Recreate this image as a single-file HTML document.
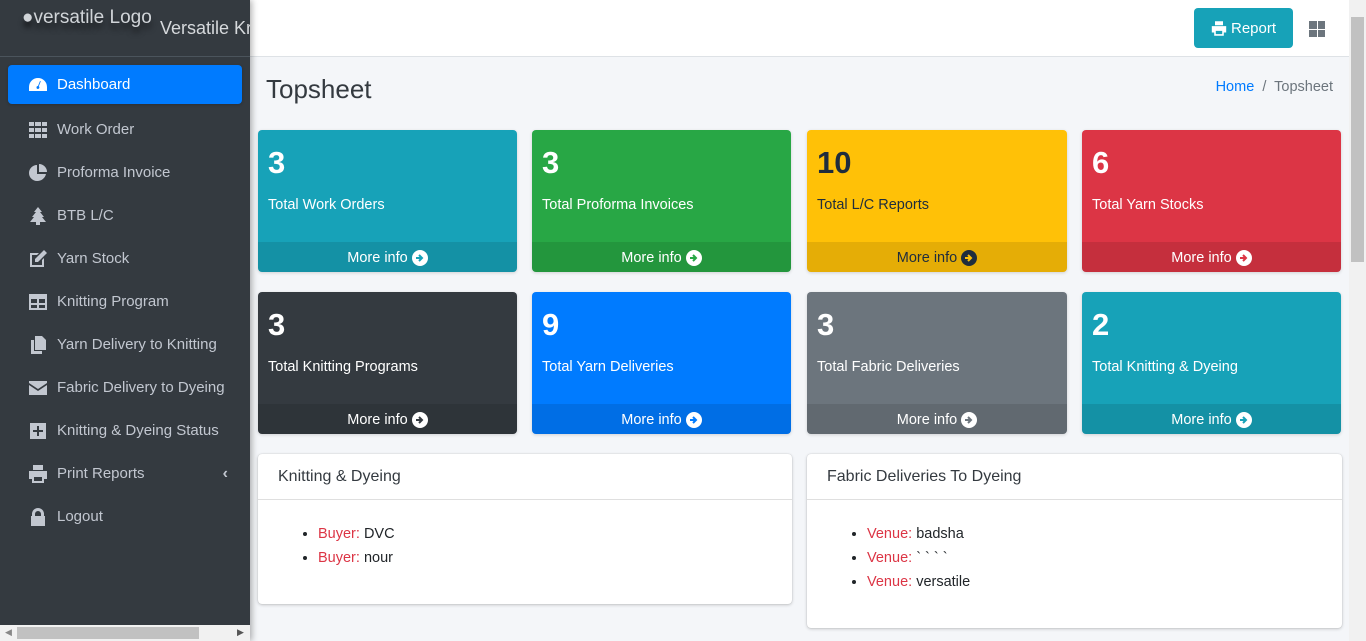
<!DOCTYPE html>
<html><head><meta charset="utf-8"><style>
*{box-sizing:border-box;margin:0;padding:0}
body{width:1366px;height:641px;overflow:hidden;background:#f4f6f9;font-family:"Liberation Sans",sans-serif;color:#212529;position:relative}
.sb{position:absolute;left:0;top:0;width:250px;height:641px;background:#343a40;box-shadow:2px 0 6px rgba(0,0,0,.3);z-index:3}
.brand{height:57px;border-bottom:1px solid #4b545c;position:relative;color:#c2c7d0;overflow:hidden;white-space:nowrap}
.brand .l1{position:absolute;left:22px;top:7px;font-size:19px;color:#d0d4d8;text-shadow:0 6px 6px rgba(0,0,0,.5)}
.brand .l2{position:absolute;left:160px;top:18px;font-size:18px;color:#d6d9dc}
.nav{padding:8px 8px}
.it{height:43px;display:flex;align-items:center;color:#c2c7d0;font-size:15px;padding-left:20px;border-radius:4px;position:relative}
.it.act{background:#007bff;color:#fff;height:39px;margin-bottom:4px;box-shadow:0 1px 3px rgba(0,0,0,.2)}
.it svg{width:20px;height:18px;margin-right:9px;fill:#c2c7d0}
.it.act svg{fill:#fff}
.hs{position:absolute;left:0;bottom:0;width:250px;height:16px;background:#f1f1f1}
.hs .th{position:absolute;left:17px;top:2px;width:182px;height:12px;background:#c1c1c1}
.top{position:absolute;left:250px;top:0;width:1099px;height:57px;background:#fff;border-bottom:1px solid #dee2e6}
.btn{position:absolute;left:944px;top:8px;width:99px;height:40px;background:#17a2b8;border-radius:4px;color:#fff;font-size:15px;display:flex;align-items:center;justify-content:center;gap:4px}
.grid{position:absolute;left:1059px;top:21px;width:16px;height:16px;display:grid;grid-template-columns:1fr 1fr;gap:1px}
.grid i{background:#6c757d}
.vs{position:absolute;right:0;top:0;width:17px;height:641px;background:#f1f1f1}
.vs .th{position:absolute;left:2px;top:17px;width:13px;height:245px;background:#c1c1c1}
h1{position:absolute;left:266px;top:74px;font-size:26px;font-weight:normal;color:#343a40}
.bc{position:absolute;right:33px;top:79px;font-size:14.5px;color:#6c757d}
.bc a{color:#007bff}
.box{position:absolute;width:259px;height:142px;border-radius:4px;color:#fff;overflow:hidden;box-shadow:0 1px 3px rgba(0,0,0,.15)}
.box b{position:absolute;left:10px;top:15px;font-size:31px}
.box span{position:absolute;left:10px;top:67px;font-size:14.5px}
.box .f{position:absolute;left:0;bottom:0;width:100%;height:30px;padding-top:2px;background:rgba(0,0,0,.1);display:flex;align-items:center;justify-content:center;font-size:14.5px;gap:4px}
.ar{width:16px;height:16px;border-radius:50%;background:currentColor;display:inline-flex;align-items:center;justify-content:center}
.card{position:absolute;background:#fff;border-radius:4px;box-shadow:0 0 1px rgba(0,0,0,.2),0 1px 3px rgba(0,0,0,.2)}
.card .h{height:46px;border-bottom:1px solid rgba(0,0,0,.125);padding:14px 20px;font-size:16px;color:#343a40}
.card ul{margin:22px 0 0 60px;font-size:14.5px;line-height:24px}
.card em{font-style:normal;color:#dc3545}
</style></head><body>
<div class="sb">
<div class="brand"><div class="l1">&#9679;versatile Logo</div><div class="l2">Versatile Kr</div></div>
<div class="nav">
<div class="it act"><svg viewBox="0 0 20 18"><path d="M10 2a9 9 0 0 0-9 9v4h18v-4a9 9 0 0 0-9-9zm0 11a1.5 1.5 0 1 1 0-3l2-5 .8.3-2 5a1.5 1.5 0 0 1-.8 2.7z"/></svg>Dashboard</div>
<div class="it"><svg viewBox="0 0 20 18"><path d="M1 1h5v4H1zM7 1h6v4H7zM14 1h5v4h-5zM1 7h5v4H1zM7 7h6v4H7zM14 7h5v4h-5zM1 13h5v4H1zM7 13h6v4H7zM14 13h5v4h-5z"/></svg>Work Order</div>
<div class="it"><svg viewBox="0 0 20 18"><path d="M9 1v9h9A9 9 0 0 1 9 17 8 8 0 0 1 9 1zM11 0a8 8 0 0 1 8 8h-8z"/></svg>Proforma Invoice</div>
<div class="it"><svg viewBox="0 0 20 18"><path d="M10 0l4 5h-2l4 5h-2l4 5h-6v3H8v-3H2l4-5H4l4-5H6z"/></svg>BTB L/C</div>
<div class="it"><svg viewBox="0 0 20 18"><path d="M2 3h9l-2 2H4v10h10v-5l2-2v9H2zM16 0l3 3-9 9H7V9z"/></svg>Yarn Stock</div>
<div class="it"><svg viewBox="0 0 20 18"><path d="M1 1h18v16H1zm2 5v4h6V6zm8 0v4h6V6zm-8 6v3h6v-3zm8 0v3h6v-3z"/></svg>Knitting Program</div>
<div class="it"><svg viewBox="0 0 20 18"><path d="M7 0h7l4 4v10H7zM3 4h3v11h8v3H3z"/></svg>Yarn Delivery to Knitting</div>
<div class="it"><svg viewBox="0 0 20 18"><path d="M1 2h18v2l-9 6-9-6zM1 6l9 6 9-6v10H1z"/></svg>Fabric Delivery to Dyeing</div>
<div class="it"><svg viewBox="0 0 20 18"><path d="M2 1h16v16H2zm7 3v4H5v2h4v4h2v-4h4V8h-4V4z"/></svg>Knitting &amp; Dyeing Status</div>
<div class="it"><svg viewBox="0 0 20 18"><path d="M5 0h10v5H5zM1 6h18v8h-3v4H4v-4H1zm5 6v4h8v-4z"/></svg>Print Reports<span style="position:absolute;right:14px;font-size:16px;font-weight:bold">&lsaquo;</span></div>
<div class="it"><svg viewBox="0 0 20 18"><path d="M4 8V6a6 6 0 0 1 12 0v2h1v10H3V8zm3 0h6V6a3 3 0 0 0-6 0z"/></svg>Logout</div>
</div>
<div class="hs"><div class="th"></div><span style="position:absolute;left:5px;top:2px;font-size:9px;color:#888">&#9664;</span><span style="position:absolute;left:237px;top:2px;font-size:9px;color:#555">&#9654;</span></div>
</div>
<div class="top">
<div class="btn"><svg width="16" height="15" viewBox="0 0 20 18" fill="#fff"><path d="M5 0h10v5H5zM1 6h18v8h-3v4H4v-4H1zm5 6v4h8v-4z"/></svg>Report</div>
<div class="grid"><i></i><i></i><i></i><i></i></div>
</div>
<div class="vs"><div class="th"></div></div>
<h1>Topsheet</h1>
<div class="bc"><a>Home</a> &nbsp;/&nbsp; Topsheet</div>

<div class="box" style="left:258px;top:130px;background:#17a2b8"><b>3</b><span>Total Work Orders</span><div class="f">More info <i class="ar"><svg width="10" height="10" viewBox="0 0 10 10"><path d="M1 5h6M4 2l3 3-3 3" stroke="#17a2b8" stroke-width="2" fill="none"/></svg></i></div></div>
<div class="box" style="left:532px;top:130px;background:#28a745"><b>3</b><span>Total Proforma Invoices</span><div class="f">More info <i class="ar"><svg width="10" height="10" viewBox="0 0 10 10"><path d="M1 5h6M4 2l3 3-3 3" stroke="#28a745" stroke-width="2" fill="none"/></svg></i></div></div>
<div class="box" style="left:807px;top:130px;width:260px;background:#ffc107;color:#1f2d3d"><b>10</b><span>Total L/C Reports</span><div class="f">More info <i class="ar"><svg width="10" height="10" viewBox="0 0 10 10"><path d="M1 5h6M4 2l3 3-3 3" stroke="#ffc107" stroke-width="2" fill="none"/></svg></i></div></div>
<div class="box" style="left:1082px;top:130px;background:#dc3545"><b>6</b><span>Total Yarn Stocks</span><div class="f">More info <i class="ar"><svg width="10" height="10" viewBox="0 0 10 10"><path d="M1 5h6M4 2l3 3-3 3" stroke="#dc3545" stroke-width="2" fill="none"/></svg></i></div></div>
<div class="box" style="left:258px;top:292px;background:#343a40"><b>3</b><span>Total Knitting Programs</span><div class="f">More info <i class="ar"><svg width="10" height="10" viewBox="0 0 10 10"><path d="M1 5h6M4 2l3 3-3 3" stroke="#343a40" stroke-width="2" fill="none"/></svg></i></div></div>
<div class="box" style="left:532px;top:292px;background:#007bff"><b>9</b><span>Total Yarn Deliveries</span><div class="f">More info <i class="ar"><svg width="10" height="10" viewBox="0 0 10 10"><path d="M1 5h6M4 2l3 3-3 3" stroke="#007bff" stroke-width="2" fill="none"/></svg></i></div></div>
<div class="box" style="left:807px;top:292px;width:260px;background:#6c757d"><b>3</b><span>Total Fabric Deliveries</span><div class="f">More info <i class="ar"><svg width="10" height="10" viewBox="0 0 10 10"><path d="M1 5h6M4 2l3 3-3 3" stroke="#6c757d" stroke-width="2" fill="none"/></svg></i></div></div>
<div class="box" style="left:1082px;top:292px;background:#17a2b8"><b>2</b><span>Total Knitting &amp; Dyeing</span><div class="f">More info <i class="ar"><svg width="10" height="10" viewBox="0 0 10 10"><path d="M1 5h6M4 2l3 3-3 3" stroke="#17a2b8" stroke-width="2" fill="none"/></svg></i></div></div>

<div class="card" style="left:258px;top:454px;width:534px;height:150px"><div class="h">Knitting &amp; Dyeing</div><ul><li><em>Buyer:</em> DVC</li><li><em>Buyer:</em> nour</li></ul></div>
<div class="card" style="left:807px;top:454px;width:535px;height:174px"><div class="h">Fabric Deliveries To Dyeing</div><ul><li><em>Venue:</em> badsha</li><li><em>Venue:</em> &#96; &#96; &#96; &#96;</li><li><em>Venue:</em> versatile</li></ul></div>
</body></html>
